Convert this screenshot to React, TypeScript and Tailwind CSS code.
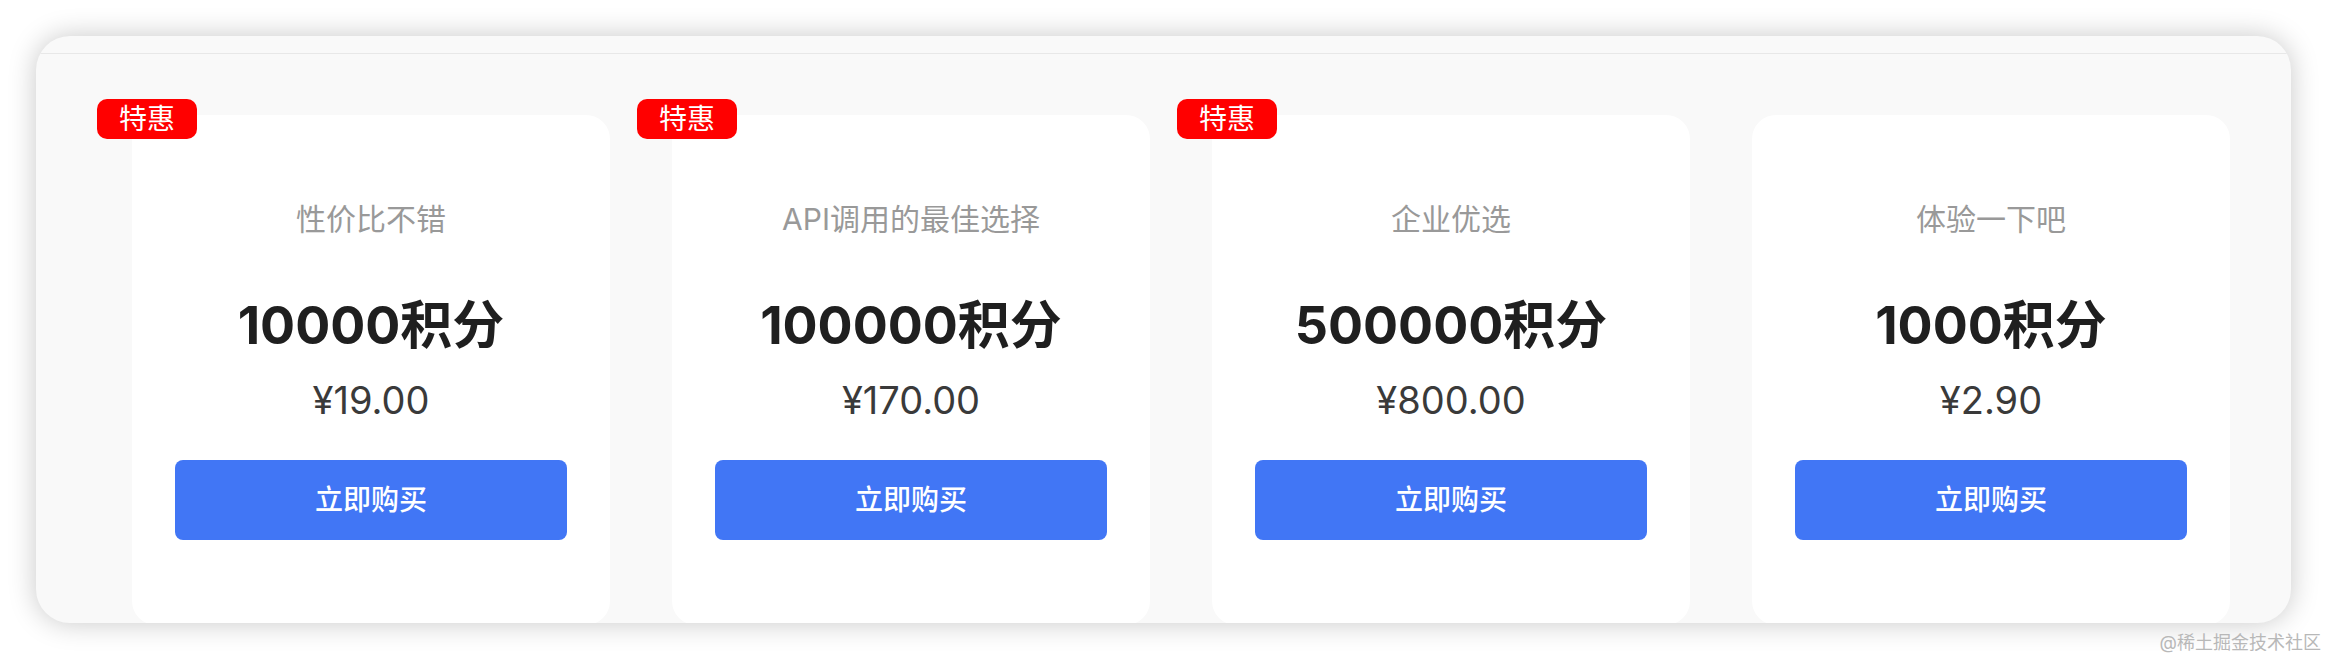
import React from 'react';

interface Plan {
  title: string;
  points: string;
  price: string;
  deal: boolean;
}

const plans: Plan[] = [
  { title: '性价比不错', points: '10000积分', price: '¥19.00', deal: true },
  { title: 'API调用的最佳选择', points: '100000积分', price: '¥170.00', deal: true },
  { title: '企业优选', points: '500000积分', price: '¥800.00', deal: true },
  { title: '体验一下吧', points: '1000积分', price: '¥2.90', deal: false },
];

const PlanCard: React.FC<{ plan: Plan }> = ({ plan }) => (
  <div className="relative w-[478px] h-[510px] flex-shrink-0 bg-white rounded-3xl flex flex-col items-center pt-[84px]">
    {plan.deal && (
      <span className="absolute -left-[35px] -top-[16px] w-[100px] h-[40px] bg-[#ff0000] rounded-[10px] text-white text-[28px] leading-[40px] text-center">
        特惠
      </span>
    )}
    <p className="text-[30px] leading-[40px] text-[#999999]">{plan.title}</p>
    <p className="mt-[57px] text-[52px] leading-[60px] font-bold text-[#1f1f1f]">{plan.points}</p>
    <p className="mt-[22px] text-[38px] leading-[44px] text-[#3a3a3a]">{plan.price}</p>
    <button className="mt-[38px] w-[392px] h-[80px] bg-[#4176f5] rounded-lg text-white text-[28px] font-medium">
      立即购买
    </button>
  </div>
);

export default function App() {
  return (
    <div
      className="relative w-[2328px] h-[660px] bg-white pt-[36px] pl-[36px]"
      style={{ fontFamily: 'Inter, "Noto Sans CJK SC", sans-serif' }}
    >
      <div className="w-[2255px] h-[587px] bg-[#f9f9f9] rounded-[34px] overflow-hidden shadow-[0_0_28px_rgba(0,0,0,0.22)] flex flex-col">
        {/* Header strip */}
        <div className="h-[18px] border-b border-[#e8e8e8] flex-shrink-0"></div>

        {/* Cards */}
        <div className="flex gap-[62px] pl-[96px] pt-[61px]">
          {plans.map(plan => (
            <PlanCard key={plan.points} plan={plan} />
          ))}
        </div>
      </div>

      <span className="absolute right-[7px] bottom-[6px] text-[18px] leading-[22px] text-[#b8b8b8]">
        @稀土掘金技术社区
      </span>
    </div>
  );
}
